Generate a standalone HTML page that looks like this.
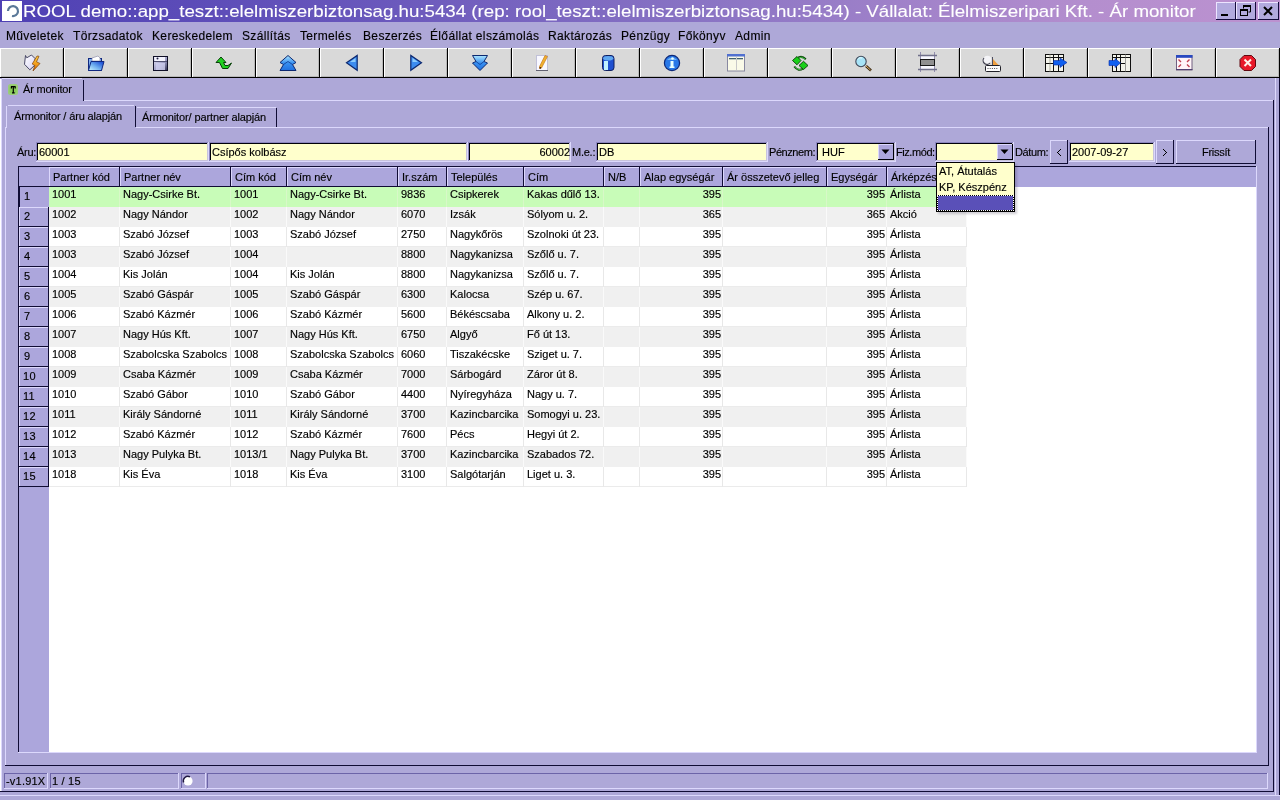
<!DOCTYPE html>
<html><head><meta charset="utf-8"><style>
*{box-sizing:border-box;margin:0;padding:0}
html,body{width:1280px;height:800px;overflow:hidden}
body{position:relative;background:#aea8d8;font-family:"Liberation Sans",sans-serif;font-size:11px;color:#000}
.a{position:absolute}
.t{position:absolute;white-space:nowrap;line-height:13px;-webkit-text-stroke:0.15px #000}
svg{position:absolute;overflow:visible}
</style></head><body>
<div id="root" style="position:absolute;left:0;top:0;width:1280px;height:800px;will-change:transform">
<div class="a" style="left:0px;top:0px;width:1280px;height:22px;background:linear-gradient(to right,#4e40b4 0%,#6a58bc 30%,#8a74c4 55%,#b48ece 85%,#bc92d0 100%)"></div>
<div class="a" style="left:2px;top:1px;width:20px;height:20px;background:#fff"></div>
<svg style="left:2px;top:1px" width="20" height="20"><path d="M6 10 A5 5 0 1 1 10 15" fill="none" stroke="#5a7898" stroke-width="2.2"/></svg>
<div class="t" style="left:23px;top:1px;font-size:17px;line-height:21px;color:#fff;transform:scaleX(1.1);transform-origin:0 0;-webkit-text-stroke:0.1px #fff">ROOL demo::app_teszt::elelmiszerbiztonsag.hu:5434 (rep: rool_teszt::elelmiszerbiztonsag.hu:5434) - Vállalat: Élelmiszeripari Kft. - Ár monitor</div>
<div class="a" style="left:1216px;top:2px;width:20px;height:18px;background:#b2aade"></div>
<div class="a" style="left:1216px;top:2px;width:20px;height:1px;background:#ece4ff"></div>
<div class="a" style="left:1216px;top:2px;width:1px;height:18px;background:#ece4ff"></div>
<div class="a" style="left:1216px;top:19px;width:20px;height:1px;background:#140c3c"></div>
<div class="a" style="left:1235px;top:2px;width:1px;height:18px;background:#140c3c"></div>
<div class="a" style="left:1236px;top:2px;width:20px;height:18px;background:#b2aade"></div>
<div class="a" style="left:1236px;top:2px;width:20px;height:1px;background:#ece4ff"></div>
<div class="a" style="left:1236px;top:2px;width:1px;height:18px;background:#ece4ff"></div>
<div class="a" style="left:1236px;top:19px;width:20px;height:1px;background:#140c3c"></div>
<div class="a" style="left:1255px;top:2px;width:1px;height:18px;background:#140c3c"></div>
<div class="a" style="left:1258px;top:2px;width:21px;height:18px;background:#b2aade"></div>
<div class="a" style="left:1258px;top:2px;width:21px;height:1px;background:#ece4ff"></div>
<div class="a" style="left:1258px;top:2px;width:1px;height:18px;background:#ece4ff"></div>
<div class="a" style="left:1258px;top:19px;width:21px;height:1px;background:#140c3c"></div>
<div class="a" style="left:1278px;top:2px;width:1px;height:18px;background:#140c3c"></div>
<svg style="left:1216px;top:2px" width="20" height="18"><rect x="5" y="12" width="7" height="2" fill="#000"/></svg>
<svg style="left:1236px;top:2px" width="20" height="18"><path d="M7.5 3.5h7v6.5h-2 M7.5 3.5v3" fill="none" stroke="#000" stroke-width="1"/><rect x="7" y="3" width="8" height="2" fill="#000"/><rect x="4.5" y="7.5" width="7" height="6" fill="none" stroke="#000"/><rect x="4" y="7" width="8" height="2" fill="#000"/></svg>
<svg style="left:1258px;top:2px" width="21" height="18"><path d="M6 5L14 13M14 5L6 13" stroke="#000" stroke-width="2"/></svg>
<div class="t" style="left:6px;top:30px;font-size:12px;letter-spacing:0.35px">Műveletek</div>
<div class="t" style="left:73px;top:30px;font-size:12px;letter-spacing:0.35px">Törzsadatok</div>
<div class="t" style="left:152px;top:30px;font-size:12px;letter-spacing:0.35px">Kereskedelem</div>
<div class="t" style="left:242px;top:30px;font-size:12px;letter-spacing:0.35px">Szállítás</div>
<div class="t" style="left:300px;top:30px;font-size:12px;letter-spacing:0.35px">Termelés</div>
<div class="t" style="left:363px;top:30px;font-size:12px;letter-spacing:0.35px">Beszerzés</div>
<div class="t" style="left:430px;top:30px;font-size:12px;letter-spacing:0.35px">Élőállat elszámolás</div>
<div class="t" style="left:548px;top:30px;font-size:12px;letter-spacing:0.35px">Raktározás</div>
<div class="t" style="left:621px;top:30px;font-size:12px;letter-spacing:0.35px">Pénzügy</div>
<div class="t" style="left:678px;top:30px;font-size:12px;letter-spacing:0.35px">Főkönyv</div>
<div class="t" style="left:735px;top:30px;font-size:12px;letter-spacing:0.35px">Admin</div>
<div class="a" style="left:0px;top:48px;width:64px;height:30px;background:#d9d9d9"></div>
<div class="a" style="left:0px;top:48px;width:64px;height:1px;background:#ffffff"></div>
<div class="a" style="left:0px;top:48px;width:1px;height:30px;background:#ffffff"></div>
<div class="a" style="left:0px;top:77px;width:64px;height:1px;background:#000000"></div>
<div class="a" style="left:63px;top:48px;width:1px;height:30px;background:#000000"></div>
<div class="a" style="left:62px;top:49px;width:1px;height:28px;background:#b8b8b8"></div>
<div class="a" style="left:1px;top:76px;width:62px;height:1px;background:#b8b8b8"></div>
<svg style="left:0;top:0" width="1280" height="80" viewBox="0 0 1280 80"><defs><linearGradient id="lt" x1="0" y1="0" x2="1" y2="1"><stop offset="0" stop-color="#ffffff"/><stop offset="1" stop-color="#d8d4f4"/></linearGradient>
<linearGradient id="lb" x1="0" y1="0" x2="0" y2="1"><stop offset="0" stop-color="#ffd040"/><stop offset="0.6" stop-color="#f09818"/><stop offset="1" stop-color="#c05808"/></linearGradient></defs>
<polygon points="25.5,55.5 26.8,57.8 31.5,55 35,58.5 34.5,65.5 29.8,69.8 24.5,64.3" fill="url(#lt)" stroke="#383858" stroke-width="0.9"/>
<polygon points="37,56 39,56.3 36.5,61.8 40,63.5 33,71 34.8,65.5 32.2,64" fill="url(#lb)" stroke="#804010" stroke-width="0.7"/></svg>
<div class="a" style="left:64px;top:48px;width:64px;height:30px;background:#d9d9d9"></div>
<div class="a" style="left:64px;top:48px;width:64px;height:1px;background:#ffffff"></div>
<div class="a" style="left:64px;top:48px;width:1px;height:30px;background:#ffffff"></div>
<div class="a" style="left:64px;top:77px;width:64px;height:1px;background:#000000"></div>
<div class="a" style="left:127px;top:48px;width:1px;height:30px;background:#000000"></div>
<div class="a" style="left:126px;top:49px;width:1px;height:28px;background:#b8b8b8"></div>
<div class="a" style="left:65px;top:76px;width:62px;height:1px;background:#b8b8b8"></div>
<svg style="left:0;top:0" width="1280" height="80" viewBox="0 0 1280 80"><rect x="88.5" y="58.5" width="13" height="12" fill="#80b0f0" stroke="#102880"/>
<polygon points="92,58 98,56 100,58 100,61 92,61" fill="#ffffff" stroke="#8080a0" stroke-width="0.6"/>
<defs><linearGradient id="fg" x1="0" y1="1" x2="1" y2="0"><stop offset="0" stop-color="#d0f8ff"/><stop offset="0.45" stop-color="#70b0f0"/><stop offset="1" stop-color="#0838d0"/></linearGradient></defs>
<polygon points="91,61.5 104,61.5 101.5,70.5 88.5,70.5" fill="url(#fg)" stroke="#102880"/></svg>
<div class="a" style="left:128px;top:48px;width:64px;height:30px;background:#d9d9d9"></div>
<div class="a" style="left:128px;top:48px;width:64px;height:1px;background:#ffffff"></div>
<div class="a" style="left:128px;top:48px;width:1px;height:30px;background:#ffffff"></div>
<div class="a" style="left:128px;top:77px;width:64px;height:1px;background:#000000"></div>
<div class="a" style="left:191px;top:48px;width:1px;height:30px;background:#000000"></div>
<div class="a" style="left:190px;top:49px;width:1px;height:28px;background:#b8b8b8"></div>
<div class="a" style="left:129px;top:76px;width:62px;height:1px;background:#b8b8b8"></div>
<svg style="left:0;top:0" width="1280" height="80" viewBox="0 0 1280 80"><defs><linearGradient id="fl" x1="0" y1="0" x2="1" y2="1"><stop offset="0" stop-color="#f0f0ff"/><stop offset="0.6" stop-color="#9898c0"/><stop offset="1" stop-color="#303050"/></linearGradient></defs>
<rect x="153.5" y="56.5" width="14" height="14" fill="url(#fl)" stroke="#101028"/>
<rect x="155" y="57" width="10" height="4" fill="#f4f4ff"/>
<line x1="154" y1="61.5" x2="167" y2="61.5" stroke="#505070"/>
<rect x="156" y="63" width="9" height="7" fill="#d0d0f0" opacity="0.8"/>
<circle cx="157.5" cy="58.5" r="1" fill="#202040"/></svg>
<div class="a" style="left:192px;top:48px;width:64px;height:30px;background:#d9d9d9"></div>
<div class="a" style="left:192px;top:48px;width:64px;height:1px;background:#ffffff"></div>
<div class="a" style="left:192px;top:48px;width:1px;height:30px;background:#ffffff"></div>
<div class="a" style="left:192px;top:77px;width:64px;height:1px;background:#000000"></div>
<div class="a" style="left:255px;top:48px;width:1px;height:30px;background:#000000"></div>
<div class="a" style="left:254px;top:49px;width:1px;height:28px;background:#b8b8b8"></div>
<div class="a" style="left:193px;top:76px;width:62px;height:1px;background:#b8b8b8"></div>
<svg style="left:0;top:0" width="1280" height="80" viewBox="0 0 1280 80"><polygon points="216,62.5 221,57 226,62.5 223.5,62.5 225,65.5 228,65.5 231.5,63 228,68.5 222.5,68.5 219.5,62.5" fill="#20d020" stroke="#084008" stroke-width="1"/></svg>
<div class="a" style="left:256px;top:48px;width:64px;height:30px;background:#d9d9d9"></div>
<div class="a" style="left:256px;top:48px;width:64px;height:1px;background:#ffffff"></div>
<div class="a" style="left:256px;top:48px;width:1px;height:30px;background:#ffffff"></div>
<div class="a" style="left:256px;top:77px;width:64px;height:1px;background:#000000"></div>
<div class="a" style="left:319px;top:48px;width:1px;height:30px;background:#000000"></div>
<div class="a" style="left:318px;top:49px;width:1px;height:28px;background:#b8b8b8"></div>
<div class="a" style="left:257px;top:76px;width:62px;height:1px;background:#b8b8b8"></div>
<svg style="left:0;top:0" width="1280" height="80" viewBox="0 0 1280 80"><defs><linearGradient id="bg4" x1="0" y1="0" x2="0" y2="1"><stop offset="0" stop-color="#b0e8ff"/><stop offset="0.5" stop-color="#3890f0"/><stop offset="1" stop-color="#2070e0"/></linearGradient></defs>
<polygon points="288,55.5 296,62.5 292.5,64.5 296,70.5 280,70.5 283.5,64.5 280,62.5" fill="url(#bg4)" stroke="#0c2870" stroke-width="1"/>
<path d="M283.5 64.5L288 61.5L292.5 64.5" fill="none" stroke="#0c3890" stroke-width="0.8"/></svg>
<div class="a" style="left:320px;top:48px;width:64px;height:30px;background:#d9d9d9"></div>
<div class="a" style="left:320px;top:48px;width:64px;height:1px;background:#ffffff"></div>
<div class="a" style="left:320px;top:48px;width:1px;height:30px;background:#ffffff"></div>
<div class="a" style="left:320px;top:77px;width:64px;height:1px;background:#000000"></div>
<div class="a" style="left:383px;top:48px;width:1px;height:30px;background:#000000"></div>
<div class="a" style="left:382px;top:49px;width:1px;height:28px;background:#b8b8b8"></div>
<div class="a" style="left:321px;top:76px;width:62px;height:1px;background:#b8b8b8"></div>
<svg style="left:0;top:0" width="1280" height="80" viewBox="0 0 1280 80"><polygon points="346.5,62.8 357.2,55.5 357.2,70.3" fill="#3c8cf0" stroke="#0c2870" stroke-width="1.2"/>
<polygon points="350,62 355.5,58 355.5,62" fill="#a0dcff" opacity="0.8"/></svg>
<div class="a" style="left:384px;top:48px;width:64px;height:30px;background:#d9d9d9"></div>
<div class="a" style="left:384px;top:48px;width:64px;height:1px;background:#ffffff"></div>
<div class="a" style="left:384px;top:48px;width:1px;height:30px;background:#ffffff"></div>
<div class="a" style="left:384px;top:77px;width:64px;height:1px;background:#000000"></div>
<div class="a" style="left:447px;top:48px;width:1px;height:30px;background:#000000"></div>
<div class="a" style="left:446px;top:49px;width:1px;height:28px;background:#b8b8b8"></div>
<div class="a" style="left:385px;top:76px;width:62px;height:1px;background:#b8b8b8"></div>
<svg style="left:0;top:0" width="1280" height="80" viewBox="0 0 1280 80"><polygon points="421.5,62.8 410.8,55.5 410.8,70.3" fill="#3c8cf0" stroke="#0c2870" stroke-width="1.2"/>
<polygon points="418,62 412.5,58 412.5,62" fill="#a0dcff" opacity="0.8"/></svg>
<div class="a" style="left:448px;top:48px;width:64px;height:30px;background:#d9d9d9"></div>
<div class="a" style="left:448px;top:48px;width:64px;height:1px;background:#ffffff"></div>
<div class="a" style="left:448px;top:48px;width:1px;height:30px;background:#ffffff"></div>
<div class="a" style="left:448px;top:77px;width:64px;height:1px;background:#000000"></div>
<div class="a" style="left:511px;top:48px;width:1px;height:30px;background:#000000"></div>
<div class="a" style="left:510px;top:49px;width:1px;height:28px;background:#b8b8b8"></div>
<div class="a" style="left:449px;top:76px;width:62px;height:1px;background:#b8b8b8"></div>
<svg style="left:0;top:0" width="1280" height="80" viewBox="0 0 1280 80"><defs><linearGradient id="bg7" x1="0" y1="0" x2="0" y2="1"><stop offset="0" stop-color="#b0e8ff"/><stop offset="0.5" stop-color="#3890f0"/><stop offset="1" stop-color="#2070e0"/></linearGradient></defs>
<polygon points="472.5,55.5 487.5,55.5 484,61.5 487.5,63 480,70.5 472.5,63 476,61.5" fill="url(#bg7)" stroke="#0c2870" stroke-width="1"/>
<path d="M476 61.5L480 64.5L484 61.5" fill="none" stroke="#0c3890" stroke-width="0.8"/></svg>
<div class="a" style="left:512px;top:48px;width:64px;height:30px;background:#d9d9d9"></div>
<div class="a" style="left:512px;top:48px;width:64px;height:1px;background:#ffffff"></div>
<div class="a" style="left:512px;top:48px;width:1px;height:30px;background:#ffffff"></div>
<div class="a" style="left:512px;top:77px;width:64px;height:1px;background:#000000"></div>
<div class="a" style="left:575px;top:48px;width:1px;height:30px;background:#000000"></div>
<div class="a" style="left:574px;top:49px;width:1px;height:28px;background:#b8b8b8"></div>
<div class="a" style="left:513px;top:76px;width:62px;height:1px;background:#b8b8b8"></div>
<svg style="left:0;top:0" width="1280" height="80" viewBox="0 0 1280 80"><rect x="536.5" y="55.5" width="11" height="15" fill="#f8f8ff" stroke="#c0c0d8" stroke-width="1"/>
<line x1="536" y1="70.5" x2="548" y2="70.5" stroke="#606070"/>
<polygon points="545,55.5 547.5,56.5 541.5,68 539.5,68.5 539.5,66.5" fill="#f0b030" stroke="#c07010" stroke-width="0.6"/>
<circle cx="540.3" cy="67.8" r="0.9" fill="#402010"/></svg>
<div class="a" style="left:576px;top:48px;width:64px;height:30px;background:#d9d9d9"></div>
<div class="a" style="left:576px;top:48px;width:64px;height:1px;background:#ffffff"></div>
<div class="a" style="left:576px;top:48px;width:1px;height:30px;background:#ffffff"></div>
<div class="a" style="left:576px;top:77px;width:64px;height:1px;background:#000000"></div>
<div class="a" style="left:639px;top:48px;width:1px;height:30px;background:#000000"></div>
<div class="a" style="left:638px;top:49px;width:1px;height:28px;background:#b8b8b8"></div>
<div class="a" style="left:577px;top:76px;width:62px;height:1px;background:#b8b8b8"></div>
<svg style="left:0;top:0" width="1280" height="80" viewBox="0 0 1280 80"><rect x="602.5" y="55.5" width="11.5" height="15" rx="3" fill="#2050d0" stroke="#102060" stroke-width="1"/>
<ellipse cx="608.2" cy="58.3" rx="5" ry="2.3" fill="#60a8f0"/>
<rect x="604" y="61" width="4" height="9" fill="#c0f0ff"/></svg>
<div class="a" style="left:640px;top:48px;width:64px;height:30px;background:#d9d9d9"></div>
<div class="a" style="left:640px;top:48px;width:64px;height:1px;background:#ffffff"></div>
<div class="a" style="left:640px;top:48px;width:1px;height:30px;background:#ffffff"></div>
<div class="a" style="left:640px;top:77px;width:64px;height:1px;background:#000000"></div>
<div class="a" style="left:703px;top:48px;width:1px;height:30px;background:#000000"></div>
<div class="a" style="left:702px;top:49px;width:1px;height:28px;background:#b8b8b8"></div>
<div class="a" style="left:641px;top:76px;width:62px;height:1px;background:#b8b8b8"></div>
<svg style="left:0;top:0" width="1280" height="80" viewBox="0 0 1280 80"><circle cx="672" cy="63" r="7.6" fill="#2878e8" stroke="#0c2878" stroke-width="1.2"/>
<path d="M667 60 A6 5 0 0 1 677 60" fill="#a8e0ff" opacity="0.6"/>
<rect x="670.5" y="61" width="3" height="6.5" fill="#e8ffff"/><rect x="669.5" y="66.5" width="5" height="1.5" fill="#e8ffff"/>
<circle cx="672.5" cy="58.5" r="1.3" fill="#e8ffff"/></svg>
<div class="a" style="left:704px;top:48px;width:64px;height:30px;background:#d9d9d9"></div>
<div class="a" style="left:704px;top:48px;width:64px;height:1px;background:#ffffff"></div>
<div class="a" style="left:704px;top:48px;width:1px;height:30px;background:#ffffff"></div>
<div class="a" style="left:704px;top:77px;width:64px;height:1px;background:#000000"></div>
<div class="a" style="left:767px;top:48px;width:1px;height:30px;background:#000000"></div>
<div class="a" style="left:766px;top:49px;width:1px;height:28px;background:#b8b8b8"></div>
<div class="a" style="left:705px;top:76px;width:62px;height:1px;background:#b8b8b8"></div>
<svg style="left:0;top:0" width="1280" height="80" viewBox="0 0 1280 80"><rect x="727.5" y="54.5" width="17" height="16.5" fill="#fafae8" stroke="#8888a0" stroke-width="1"/>
<rect x="727" y="54" width="18" height="2.5" fill="#5070d0"/>
<rect x="729" y="58" width="7" height="1.3" fill="#406070"/><rect x="737" y="58" width="6" height="1.3" fill="#406070"/>
<line x1="736.5" y1="57" x2="736.5" y2="70" stroke="#c8c8c8"/></svg>
<div class="a" style="left:768px;top:48px;width:64px;height:30px;background:#d9d9d9"></div>
<div class="a" style="left:768px;top:48px;width:64px;height:1px;background:#ffffff"></div>
<div class="a" style="left:768px;top:48px;width:1px;height:30px;background:#ffffff"></div>
<div class="a" style="left:768px;top:77px;width:64px;height:1px;background:#000000"></div>
<div class="a" style="left:831px;top:48px;width:1px;height:30px;background:#000000"></div>
<div class="a" style="left:830px;top:49px;width:1px;height:28px;background:#b8b8b8"></div>
<div class="a" style="left:769px;top:76px;width:62px;height:1px;background:#b8b8b8"></div>
<svg style="left:0;top:0" width="1280" height="80" viewBox="0 0 1280 80"><path d="M797 58.5Q801.5 55 805.8 59.2" fill="none" stroke="#0a4a0a" stroke-width="2"/><path d="M797.5 58.3Q801.5 55.8 805 59" fill="none" stroke="#50e050" stroke-width="0.8"/>
<polygon points="792.5,60.5 797,56.5 801,60.5 797,64.8" fill="#18d018" stroke="#084008" stroke-width="0.9"/>
<path d="M803 68.5Q798.5 72 794.3 66.5" fill="none" stroke="#0a4a0a" stroke-width="2"/><path d="M802.5 68.7Q798.5 71.2 795 66.8" fill="none" stroke="#50e050" stroke-width="0.8"/>
<polygon points="799,65.5 803.5,61.3 808,65.5 803.5,69.5" fill="#18d018" stroke="#084008" stroke-width="0.9"/></svg>
<div class="a" style="left:832px;top:48px;width:64px;height:30px;background:#d9d9d9"></div>
<div class="a" style="left:832px;top:48px;width:64px;height:1px;background:#ffffff"></div>
<div class="a" style="left:832px;top:48px;width:1px;height:30px;background:#ffffff"></div>
<div class="a" style="left:832px;top:77px;width:64px;height:1px;background:#000000"></div>
<div class="a" style="left:895px;top:48px;width:1px;height:30px;background:#000000"></div>
<div class="a" style="left:894px;top:49px;width:1px;height:28px;background:#b8b8b8"></div>
<div class="a" style="left:833px;top:76px;width:62px;height:1px;background:#b8b8b8"></div>
<svg style="left:0;top:0" width="1280" height="80" viewBox="0 0 1280 80"><circle cx="861" cy="61.5" r="5.2" fill="#a8e4f8" stroke="#404858" stroke-width="1.1"/>
<path d="M858 59.5 A3 3 0 0 1 862 58" stroke="#e8ffff" fill="none"/>
<line x1="866" y1="66" x2="871" y2="70.5" stroke="#3a2810" stroke-width="2.6"/>
<line x1="866" y1="66" x2="870.5" y2="70" stroke="#e8b870" stroke-width="1"/></svg>
<div class="a" style="left:896px;top:48px;width:64px;height:30px;background:#d9d9d9"></div>
<div class="a" style="left:896px;top:48px;width:64px;height:1px;background:#ffffff"></div>
<div class="a" style="left:896px;top:48px;width:1px;height:30px;background:#ffffff"></div>
<div class="a" style="left:896px;top:77px;width:64px;height:1px;background:#000000"></div>
<div class="a" style="left:959px;top:48px;width:1px;height:30px;background:#000000"></div>
<div class="a" style="left:958px;top:49px;width:1px;height:28px;background:#b8b8b8"></div>
<div class="a" style="left:897px;top:76px;width:62px;height:1px;background:#b8b8b8"></div>
<svg style="left:0;top:0" width="1280" height="80" viewBox="0 0 1280 80"><rect x="920.5" y="56" width="14" height="3.5" fill="#f8f8ff"/><rect x="920.5" y="65.5" width="14" height="3.5" fill="#f8f8ff"/>
<line x1="920.5" y1="52" x2="920.5" y2="72" stroke="#8a84a8" stroke-width="0.9"/><line x1="934.5" y1="52" x2="934.5" y2="72" stroke="#8a84a8" stroke-width="0.9"/>
<path d="M918 55.5h19M918 69.5h19" stroke="#70708a" stroke-width="1.4"/>
<rect x="920.5" y="59.5" width="14" height="6" fill="#909090" stroke="#181818" stroke-width="1"/></svg>
<div class="a" style="left:960px;top:48px;width:64px;height:30px;background:#d9d9d9"></div>
<div class="a" style="left:960px;top:48px;width:64px;height:1px;background:#ffffff"></div>
<div class="a" style="left:960px;top:48px;width:1px;height:30px;background:#ffffff"></div>
<div class="a" style="left:960px;top:77px;width:64px;height:1px;background:#000000"></div>
<div class="a" style="left:1023px;top:48px;width:1px;height:30px;background:#000000"></div>
<div class="a" style="left:1022px;top:49px;width:1px;height:28px;background:#b8b8b8"></div>
<div class="a" style="left:961px;top:76px;width:62px;height:1px;background:#b8b8b8"></div>
<svg style="left:0;top:0" width="1280" height="80" viewBox="0 0 1280 80"><polygon points="992,58 998.5,65 992,65" fill="#f0a040"/>
<rect x="985.5" y="65.5" width="15" height="6" rx="1" fill="#fcfcfc" stroke="#202028" stroke-width="1"/>
<path d="M987.5 68.5h11" stroke="#505058" stroke-dasharray="1 1.2"/>
<line x1="992.5" y1="57" x2="992.5" y2="65" stroke="#505060"/>
<circle cx="987.5" cy="59.5" r="3.8" fill="#f4f4f8"/>
<path d="M984 58A3.8 3.8 0 0 0 990 63" fill="none" stroke="#404050" stroke-width="1.1"/></svg>
<div class="a" style="left:1024px;top:48px;width:64px;height:30px;background:#d9d9d9"></div>
<div class="a" style="left:1024px;top:48px;width:64px;height:1px;background:#ffffff"></div>
<div class="a" style="left:1024px;top:48px;width:1px;height:30px;background:#ffffff"></div>
<div class="a" style="left:1024px;top:77px;width:64px;height:1px;background:#000000"></div>
<div class="a" style="left:1087px;top:48px;width:1px;height:30px;background:#000000"></div>
<div class="a" style="left:1086px;top:49px;width:1px;height:28px;background:#b8b8b8"></div>
<div class="a" style="left:1025px;top:76px;width:62px;height:1px;background:#b8b8b8"></div>
<svg style="left:0;top:0" width="1280" height="80" viewBox="0 0 1280 80"><rect x="1045.5" y="54.5" width="18" height="17" fill="#f4f4ec" stroke="#101010" stroke-width="1"/>
<line x1="1045" y1="57.5" x2="1064" y2="57.5" stroke="#101010"/><line x1="1045" y1="63.5" x2="1054" y2="63.5" stroke="#101010"/>
<line x1="1053.5" y1="54" x2="1053.5" y2="72" stroke="#101010"/><line x1="1058.5" y1="54" x2="1058.5" y2="72" stroke="#101010"/><line x1="1050" y1="54" x2="1050" y2="72" stroke="#808070" stroke-width="0.6"/>
<polygon points="1053.5,60.5 1060,60.5 1060,58 1067,62.5 1060,67.5 1060,65 1053.5,65" fill="#1060f0" stroke="#0828a0" stroke-width="0.6"/></svg>
<div class="a" style="left:1088px;top:48px;width:64px;height:30px;background:#d9d9d9"></div>
<div class="a" style="left:1088px;top:48px;width:64px;height:1px;background:#ffffff"></div>
<div class="a" style="left:1088px;top:48px;width:1px;height:30px;background:#ffffff"></div>
<div class="a" style="left:1088px;top:77px;width:64px;height:1px;background:#000000"></div>
<div class="a" style="left:1151px;top:48px;width:1px;height:30px;background:#000000"></div>
<div class="a" style="left:1150px;top:49px;width:1px;height:28px;background:#b8b8b8"></div>
<div class="a" style="left:1089px;top:76px;width:62px;height:1px;background:#b8b8b8"></div>
<svg style="left:0;top:0" width="1280" height="80" viewBox="0 0 1280 80"><rect x="1112.5" y="54.5" width="18" height="17" fill="#f4f4ec" stroke="#101010" stroke-width="1"/>
<line x1="1112" y1="57.5" x2="1131" y2="57.5" stroke="#101010"/><line x1="1120" y1="63.5" x2="1125" y2="63.5" stroke="#101010"/>
<line x1="1120.5" y1="54" x2="1120.5" y2="72" stroke="#101010"/><line x1="1116.5" y1="54" x2="1116.5" y2="72" stroke="#101010"/><line x1="1125.5" y1="54" x2="1125.5" y2="72" stroke="#606060" stroke-width="0.6"/>
<polygon points="1109,60.5 1115,60.5 1115,58.5 1120.5,63 1115,67.5 1115,65.5 1109,65.5" fill="#1060f0" stroke="#0828a0" stroke-width="0.6"/></svg>
<div class="a" style="left:1152px;top:48px;width:64px;height:30px;background:#d9d9d9"></div>
<div class="a" style="left:1152px;top:48px;width:64px;height:1px;background:#ffffff"></div>
<div class="a" style="left:1152px;top:48px;width:1px;height:30px;background:#ffffff"></div>
<div class="a" style="left:1152px;top:77px;width:64px;height:1px;background:#000000"></div>
<div class="a" style="left:1215px;top:48px;width:1px;height:30px;background:#000000"></div>
<div class="a" style="left:1214px;top:49px;width:1px;height:28px;background:#b8b8b8"></div>
<div class="a" style="left:1153px;top:76px;width:62px;height:1px;background:#b8b8b8"></div>
<svg style="left:0;top:0" width="1280" height="80" viewBox="0 0 1280 80"><rect x="1176.5" y="55.5" width="15.5" height="14.5" fill="#fff4f8" stroke="#706080" stroke-width="1"/>
<rect x="1176" y="55" width="16.5" height="2.8" fill="#2848c0"/>
<path d="M1178.5 59.5l2.5 2.5M1189.5 59.5l-2.5 2.5M1178.5 67l2.5-2.5M1189.5 67l-2.5-2.5" stroke="#c04050" stroke-width="1.4"/>
<line x1="1176" y1="69.5" x2="1192.5" y2="69.5" stroke="#504070"/></svg>
<div class="a" style="left:1216px;top:48px;width:64px;height:30px;background:#d9d9d9"></div>
<div class="a" style="left:1216px;top:48px;width:64px;height:1px;background:#ffffff"></div>
<div class="a" style="left:1216px;top:48px;width:1px;height:30px;background:#ffffff"></div>
<div class="a" style="left:1216px;top:77px;width:64px;height:1px;background:#000000"></div>
<div class="a" style="left:1279px;top:48px;width:1px;height:30px;background:#000000"></div>
<div class="a" style="left:1278px;top:49px;width:1px;height:28px;background:#b8b8b8"></div>
<div class="a" style="left:1217px;top:76px;width:62px;height:1px;background:#b8b8b8"></div>
<svg style="left:0;top:0" width="1280" height="80" viewBox="0 0 1280 80"><polygon points="1244,55.5 1251.5,55.5 1255.5,59.5 1255.5,66.5 1251.5,70.5 1244,70.5 1240,66.5 1240,59.5" fill="#e81828" stroke="#600810" stroke-width="1"/>
<path d="M1244.5 59.5l6.5 6.5M1251 59.5l-6.5 6.5" stroke="#fff0e8" stroke-width="2"/></svg>
<div class="a" style="left:0px;top:100px;width:1274px;height:692px;background:#aea8d8"></div>
<div class="a" style="left:1px;top:100px;width:1272px;height:1px;background:#dcd8fc"></div>
<div class="a" style="left:0px;top:100px;width:1px;height:692px;background:#ffffff"></div>
<div class="a" style="left:1px;top:100px;width:1px;height:692px;background:#dcd8fc"></div>
<div class="a" style="left:1273px;top:100px;width:1px;height:692px;background:#100c34"></div>
<div class="a" style="left:0px;top:791px;width:1274px;height:1px;background:#100c34"></div>
<div class="a" style="left:1px;top:78px;width:82px;height:23px;background:#aea8d8"></div>
<div class="a" style="left:2px;top:78px;width:80px;height:1px;background:#dcd8fc"></div>
<div class="a" style="left:0px;top:79px;width:1px;height:22px;background:#ffffff"></div>
<div class="a" style="left:1px;top:79px;width:1px;height:22px;background:#dcd8fc"></div>
<div class="a" style="left:83px;top:80px;width:1px;height:21px;background:#100c34"></div>
<svg style="left:8px;top:84px" width="10" height="11"><rect x="0" y="0" width="10" height="11" rx="2.5" fill="#98d070" opacity="0.9"/><rect x="1.5" y="1.5" width="7" height="8" rx="2" fill="#88cc58"/><path d="M3 2.7h4.5M3.4 2.5v2M7.2 2.5v2M5.3 2.5v6.3M4 8.8h2.7" stroke="#000" stroke-width="1.2"/></svg>
<div class="t" style="left:23px;top:83px;letter-spacing:-0.2px">Ár monitor</div>
<div class="a" style="left:1275px;top:78px;width:1px;height:717px;background:#dcd8fc"></div>
<div class="a" style="left:1279px;top:78px;width:1px;height:717px;background:#0c0830"></div>
<div class="a" style="left:0px;top:795px;width:1280px;height:1px;background:#dcd8fc"></div>
<div class="a" style="left:6px;top:127px;width:1262px;height:1px;background:#dcd8fc"></div>
<div class="a" style="left:5px;top:127px;width:1px;height:639px;background:#dcd8fc"></div>
<div class="a" style="left:1268px;top:127px;width:1px;height:639px;background:#100c34"></div>
<div class="a" style="left:5px;top:765px;width:1264px;height:1px;background:#100c34"></div>
<div class="a" style="left:6px;top:105px;width:130px;height:23px;background:#aea8d8"></div>
<div class="a" style="left:8px;top:105px;width:126px;height:1px;background:#dcd8fc"></div>
<div class="a" style="left:6px;top:106px;width:1px;height:22px;background:#dcd8fc"></div>
<div class="a" style="left:135px;top:106px;width:1px;height:21px;background:#100c34"></div>
<div class="t" style="left:14px;top:110px;letter-spacing:-0.14px">Ármonitor / áru alapján</div>
<div class="a" style="left:137px;top:107px;width:139px;height:1px;background:#dcd8fc"></div>
<div class="a" style="left:276px;top:108px;width:1px;height:19px;background:#100c34"></div>
<div class="t" style="left:142px;top:111px;letter-spacing:-0.12px">Ármonitor/ partner alapján</div>
<div class="t" style="left:17px;top:146px;letter-spacing:-0.3px">Áru:</div>
<div class="a" style="left:36px;top:142px;width:173px;height:20px;background:#ffffcc"></div>
<div class="a" style="left:36px;top:142px;width:173px;height:1px;background:#8c86c0"></div>
<div class="a" style="left:36px;top:142px;width:1px;height:20px;background:#8c86c0"></div>
<div class="a" style="left:37px;top:143px;width:171px;height:1px;background:#000008"></div>
<div class="a" style="left:37px;top:143px;width:1px;height:18px;background:#000008"></div>
<div class="a" style="left:37px;top:160px;width:171px;height:1px;background:#c8c4dc"></div>
<div class="a" style="left:207px;top:143px;width:1px;height:18px;background:#c8c4dc"></div>
<div class="a" style="left:36px;top:161px;width:173px;height:1px;background:#dcd8fc"></div>
<div class="a" style="left:208px;top:142px;width:1px;height:20px;background:#dcd8fc"></div>
<div class="t" style="left:39px;top:146px;">60001</div>
<div class="a" style="left:209px;top:142px;width:259px;height:20px;background:#ffffcc"></div>
<div class="a" style="left:209px;top:142px;width:259px;height:1px;background:#8c86c0"></div>
<div class="a" style="left:209px;top:142px;width:1px;height:20px;background:#8c86c0"></div>
<div class="a" style="left:210px;top:143px;width:257px;height:1px;background:#000008"></div>
<div class="a" style="left:210px;top:143px;width:1px;height:18px;background:#000008"></div>
<div class="a" style="left:210px;top:160px;width:257px;height:1px;background:#c8c4dc"></div>
<div class="a" style="left:466px;top:143px;width:1px;height:18px;background:#c8c4dc"></div>
<div class="a" style="left:209px;top:161px;width:259px;height:1px;background:#dcd8fc"></div>
<div class="a" style="left:467px;top:142px;width:1px;height:20px;background:#dcd8fc"></div>
<div class="t" style="left:212px;top:146px;">Csípős kolbász</div>
<div class="a" style="left:468px;top:142px;width:103px;height:20px;background:#ffffcc"></div>
<div class="a" style="left:468px;top:142px;width:103px;height:1px;background:#8c86c0"></div>
<div class="a" style="left:468px;top:142px;width:1px;height:20px;background:#8c86c0"></div>
<div class="a" style="left:469px;top:143px;width:101px;height:1px;background:#000008"></div>
<div class="a" style="left:469px;top:143px;width:1px;height:18px;background:#000008"></div>
<div class="a" style="left:469px;top:160px;width:101px;height:1px;background:#c8c4dc"></div>
<div class="a" style="left:569px;top:143px;width:1px;height:18px;background:#c8c4dc"></div>
<div class="a" style="left:468px;top:161px;width:103px;height:1px;background:#dcd8fc"></div>
<div class="a" style="left:570px;top:142px;width:1px;height:20px;background:#dcd8fc"></div>
<div class="t" style="left:468px;top:146px;width:102px;text-align:right">60002</div>
<div class="t" style="left:572px;top:146px;letter-spacing:-0.25px">M.e.:</div>
<div class="a" style="left:596px;top:142px;width:172px;height:20px;background:#ffffcc"></div>
<div class="a" style="left:596px;top:142px;width:172px;height:1px;background:#8c86c0"></div>
<div class="a" style="left:596px;top:142px;width:1px;height:20px;background:#8c86c0"></div>
<div class="a" style="left:597px;top:143px;width:170px;height:1px;background:#000008"></div>
<div class="a" style="left:597px;top:143px;width:1px;height:18px;background:#000008"></div>
<div class="a" style="left:597px;top:160px;width:170px;height:1px;background:#c8c4dc"></div>
<div class="a" style="left:766px;top:143px;width:1px;height:18px;background:#c8c4dc"></div>
<div class="a" style="left:596px;top:161px;width:172px;height:1px;background:#dcd8fc"></div>
<div class="a" style="left:767px;top:142px;width:1px;height:20px;background:#dcd8fc"></div>
<div class="t" style="left:599px;top:146px;">DB</div>
<div class="t" style="left:769px;top:146px;letter-spacing:-0.43px">Pénznem:</div>
<div class="a" style="left:816px;top:142px;width:80px;height:20px;background:#ffffcc"></div>
<div class="a" style="left:816px;top:142px;width:80px;height:1px;background:#8c86c0"></div>
<div class="a" style="left:816px;top:142px;width:1px;height:20px;background:#8c86c0"></div>
<div class="a" style="left:817px;top:143px;width:78px;height:1px;background:#000008"></div>
<div class="a" style="left:817px;top:143px;width:1px;height:18px;background:#000008"></div>
<div class="a" style="left:817px;top:160px;width:78px;height:1px;background:#c8c4dc"></div>
<div class="a" style="left:894px;top:143px;width:1px;height:18px;background:#c8c4dc"></div>
<div class="a" style="left:816px;top:161px;width:80px;height:1px;background:#dcd8fc"></div>
<div class="a" style="left:895px;top:142px;width:1px;height:20px;background:#dcd8fc"></div>
<div class="t" style="left:822px;top:146px;">HUF</div>
<div class="a" style="left:878px;top:144px;width:16px;height:16px;background:#aca6dc"></div>
<div class="a" style="left:878px;top:144px;width:16px;height:1px;background:#dcd8fc"></div>
<div class="a" style="left:878px;top:144px;width:1px;height:16px;background:#dcd8fc"></div>
<div class="a" style="left:878px;top:159px;width:16px;height:1px;background:#000008"></div>
<div class="a" style="left:893px;top:144px;width:1px;height:16px;background:#000008"></div>
<svg style="left:878px;top:144px" width="16" height="16"><polygon points="3.5,5.5 11.5,5.5 7.5,10" fill="#000"/></svg>
<div class="t" style="left:896px;top:146px;letter-spacing:-0.43px">Fiz.mód:</div>
<div class="a" style="left:935px;top:142px;width:79px;height:20px;background:#ffffcc"></div>
<div class="a" style="left:935px;top:142px;width:79px;height:1px;background:#8c86c0"></div>
<div class="a" style="left:935px;top:142px;width:1px;height:20px;background:#8c86c0"></div>
<div class="a" style="left:936px;top:143px;width:77px;height:1px;background:#000008"></div>
<div class="a" style="left:936px;top:143px;width:1px;height:18px;background:#000008"></div>
<div class="a" style="left:936px;top:160px;width:77px;height:1px;background:#c8c4dc"></div>
<div class="a" style="left:1012px;top:143px;width:1px;height:18px;background:#c8c4dc"></div>
<div class="a" style="left:935px;top:161px;width:79px;height:1px;background:#dcd8fc"></div>
<div class="a" style="left:1013px;top:142px;width:1px;height:20px;background:#dcd8fc"></div>
<div class="a" style="left:997px;top:144px;width:16px;height:16px;background:#aca6dc"></div>
<div class="a" style="left:997px;top:144px;width:16px;height:1px;background:#dcd8fc"></div>
<div class="a" style="left:997px;top:144px;width:1px;height:16px;background:#dcd8fc"></div>
<div class="a" style="left:997px;top:159px;width:16px;height:1px;background:#000008"></div>
<div class="a" style="left:1012px;top:144px;width:1px;height:16px;background:#000008"></div>
<svg style="left:997px;top:144px" width="16" height="16"><polygon points="3.5,5.5 11.5,5.5 7.5,10" fill="#000"/></svg>
<div class="t" style="left:1015px;top:146px;letter-spacing:-0.4px">Dátum:</div>
<div class="a" style="left:1050px;top:140px;width:18px;height:1px;background:#dcd8fc"></div>
<div class="a" style="left:1050px;top:140px;width:1px;height:24px;background:#dcd8fc"></div>
<div class="a" style="left:1050px;top:163px;width:18px;height:1px;background:#100c34"></div>
<div class="a" style="left:1067px;top:140px;width:1px;height:24px;background:#100c34"></div>
<svg style="left:1050px;top:140px" width="18" height="24"><path d="M11 9L7.5 12.5L11 16" fill="none" stroke="#000" stroke-width="1.2" shape-rendering="crispEdges"/></svg>
<div class="a" style="left:1069px;top:142px;width:86px;height:20px;background:#ffffcc"></div>
<div class="a" style="left:1069px;top:142px;width:86px;height:1px;background:#8c86c0"></div>
<div class="a" style="left:1069px;top:142px;width:1px;height:20px;background:#8c86c0"></div>
<div class="a" style="left:1070px;top:143px;width:84px;height:1px;background:#000008"></div>
<div class="a" style="left:1070px;top:143px;width:1px;height:18px;background:#000008"></div>
<div class="a" style="left:1070px;top:160px;width:84px;height:1px;background:#c8c4dc"></div>
<div class="a" style="left:1153px;top:143px;width:1px;height:18px;background:#c8c4dc"></div>
<div class="a" style="left:1069px;top:161px;width:86px;height:1px;background:#dcd8fc"></div>
<div class="a" style="left:1154px;top:142px;width:1px;height:20px;background:#dcd8fc"></div>
<div class="t" style="left:1072px;top:146px;">2007-09-27</div>
<div class="a" style="left:1156px;top:140px;width:18px;height:1px;background:#dcd8fc"></div>
<div class="a" style="left:1156px;top:140px;width:1px;height:24px;background:#dcd8fc"></div>
<div class="a" style="left:1156px;top:163px;width:18px;height:1px;background:#100c34"></div>
<div class="a" style="left:1173px;top:140px;width:1px;height:24px;background:#100c34"></div>
<svg style="left:1156px;top:140px" width="18" height="24"><path d="M7 9L10.5 12.5L7 16" fill="none" stroke="#000" stroke-width="1.2" shape-rendering="crispEdges"/></svg>
<div class="a" style="left:1176px;top:140px;width:80px;height:1px;background:#dcd8fc"></div>
<div class="a" style="left:1176px;top:140px;width:1px;height:24px;background:#dcd8fc"></div>
<div class="a" style="left:1176px;top:163px;width:80px;height:1px;background:#100c34"></div>
<div class="a" style="left:1255px;top:140px;width:1px;height:24px;background:#100c34"></div>
<div class="t" style="left:1176px;top:146px;width:80px;text-align:center;letter-spacing:-0.3px">Frissít</div>
<div class="a" style="left:18px;top:166px;width:1239px;height:1px;background:#100c34"></div>
<div class="a" style="left:18px;top:166px;width:1px;height:587px;background:#100c34"></div>
<div class="a" style="left:18px;top:752px;width:1239px;height:1px;background:#dcd8fc"></div>
<div class="a" style="left:1256px;top:166px;width:1px;height:587px;background:#dcd8fc"></div>
<div class="a" style="left:19px;top:167px;width:1237px;height:20px;background:#aca6dc"></div>
<div class="a" style="left:49px;top:187px;width:1207px;height:565px;background:#ffffff"></div>
<div class="a" style="left:19px;top:187px;width:30px;height:565px;background:#aca6dc"></div>
<div class="a" style="left:49px;top:167px;width:71px;height:1px;background:#dcd8fc"></div>
<div class="a" style="left:49px;top:167px;width:1px;height:19px;background:#dcd8fc"></div>
<div class="a" style="left:119px;top:167px;width:1px;height:20px;background:#100c34"></div>
<div class="t" style="left:53px;top:171px;">Partner kód</div>
<div class="a" style="left:120px;top:167px;width:111px;height:1px;background:#dcd8fc"></div>
<div class="a" style="left:120px;top:167px;width:1px;height:19px;background:#dcd8fc"></div>
<div class="a" style="left:230px;top:167px;width:1px;height:20px;background:#100c34"></div>
<div class="t" style="left:124px;top:171px;">Partner név</div>
<div class="a" style="left:231px;top:167px;width:56px;height:1px;background:#dcd8fc"></div>
<div class="a" style="left:231px;top:167px;width:1px;height:19px;background:#dcd8fc"></div>
<div class="a" style="left:286px;top:167px;width:1px;height:20px;background:#100c34"></div>
<div class="t" style="left:235px;top:171px;">Cím kód</div>
<div class="a" style="left:287px;top:167px;width:111px;height:1px;background:#dcd8fc"></div>
<div class="a" style="left:287px;top:167px;width:1px;height:19px;background:#dcd8fc"></div>
<div class="a" style="left:397px;top:167px;width:1px;height:20px;background:#100c34"></div>
<div class="t" style="left:291px;top:171px;">Cím név</div>
<div class="a" style="left:398px;top:167px;width:49px;height:1px;background:#dcd8fc"></div>
<div class="a" style="left:398px;top:167px;width:1px;height:19px;background:#dcd8fc"></div>
<div class="a" style="left:446px;top:167px;width:1px;height:20px;background:#100c34"></div>
<div class="t" style="left:402px;top:171px;">Ir.szám</div>
<div class="a" style="left:447px;top:167px;width:77px;height:1px;background:#dcd8fc"></div>
<div class="a" style="left:447px;top:167px;width:1px;height:19px;background:#dcd8fc"></div>
<div class="a" style="left:523px;top:167px;width:1px;height:20px;background:#100c34"></div>
<div class="t" style="left:451px;top:171px;">Település</div>
<div class="a" style="left:524px;top:167px;width:80px;height:1px;background:#dcd8fc"></div>
<div class="a" style="left:524px;top:167px;width:1px;height:19px;background:#dcd8fc"></div>
<div class="a" style="left:603px;top:167px;width:1px;height:20px;background:#100c34"></div>
<div class="t" style="left:528px;top:171px;">Cím</div>
<div class="a" style="left:604px;top:167px;width:36px;height:1px;background:#dcd8fc"></div>
<div class="a" style="left:604px;top:167px;width:1px;height:19px;background:#dcd8fc"></div>
<div class="a" style="left:639px;top:167px;width:1px;height:20px;background:#100c34"></div>
<div class="t" style="left:608px;top:171px;">N/B</div>
<div class="a" style="left:640px;top:167px;width:83px;height:1px;background:#dcd8fc"></div>
<div class="a" style="left:640px;top:167px;width:1px;height:19px;background:#dcd8fc"></div>
<div class="a" style="left:722px;top:167px;width:1px;height:20px;background:#100c34"></div>
<div class="t" style="left:644px;top:171px;">Alap egységár</div>
<div class="a" style="left:723px;top:167px;width:104px;height:1px;background:#dcd8fc"></div>
<div class="a" style="left:723px;top:167px;width:1px;height:19px;background:#dcd8fc"></div>
<div class="a" style="left:826px;top:167px;width:1px;height:20px;background:#100c34"></div>
<div class="t" style="left:727px;top:171px;">Ár összetevő jelleg</div>
<div class="a" style="left:827px;top:167px;width:60px;height:1px;background:#dcd8fc"></div>
<div class="a" style="left:827px;top:167px;width:1px;height:19px;background:#dcd8fc"></div>
<div class="a" style="left:886px;top:167px;width:1px;height:20px;background:#100c34"></div>
<div class="t" style="left:831px;top:171px;">Egységár</div>
<div class="a" style="left:887px;top:167px;width:80px;height:1px;background:#dcd8fc"></div>
<div class="a" style="left:887px;top:167px;width:1px;height:19px;background:#dcd8fc"></div>
<div class="a" style="left:966px;top:167px;width:1px;height:20px;background:#100c34"></div>
<div class="t" style="left:891px;top:171px;">Árképzés</div>
<div class="a" style="left:19px;top:186px;width:948px;height:1px;background:#100c34"></div>
<div class="a" style="left:49px;top:187px;width:918px;height:20px;background:#c8fcb8"></div>
<div class="a" style="left:119px;top:187px;width:1px;height:20px;background:#d8f8c8"></div>
<div class="t" style="left:52px;top:188px;">1001</div>
<div class="a" style="left:230px;top:187px;width:1px;height:20px;background:#d8f8c8"></div>
<div class="t" style="left:123px;top:188px;">Nagy-Csirke Bt.</div>
<div class="a" style="left:286px;top:187px;width:1px;height:20px;background:#d8f8c8"></div>
<div class="t" style="left:234px;top:188px;">1001</div>
<div class="a" style="left:397px;top:187px;width:1px;height:20px;background:#d8f8c8"></div>
<div class="t" style="left:290px;top:188px;">Nagy-Csirke Bt.</div>
<div class="a" style="left:446px;top:187px;width:1px;height:20px;background:#d8f8c8"></div>
<div class="t" style="left:401px;top:188px;">9836</div>
<div class="a" style="left:523px;top:187px;width:1px;height:20px;background:#d8f8c8"></div>
<div class="t" style="left:450px;top:188px;">Csipkerek</div>
<div class="a" style="left:603px;top:187px;width:1px;height:20px;background:#d8f8c8"></div>
<div class="t" style="left:527px;top:188px;">Kakas dűlő 13.</div>
<div class="a" style="left:639px;top:187px;width:1px;height:20px;background:#d8f8c8"></div>
<div class="a" style="left:722px;top:187px;width:1px;height:20px;background:#d8f8c8"></div>
<div class="t" style="left:640px;top:188px;width:81px;text-align:right">395</div>
<div class="a" style="left:826px;top:187px;width:1px;height:20px;background:#d8f8c8"></div>
<div class="a" style="left:886px;top:187px;width:1px;height:20px;background:#d8f8c8"></div>
<div class="t" style="left:827px;top:188px;width:58px;text-align:right">395</div>
<div class="a" style="left:966px;top:187px;width:1px;height:20px;background:#d8f8c8"></div>
<div class="t" style="left:890px;top:188px;">Árlista</div>
<div class="a" style="left:18px;top:187px;width:1px;height:20px;background:#100c34"></div>
<div class="a" style="left:19px;top:187px;width:1px;height:20px;background:#100c34"></div>
<div class="t" style="left:24px;top:190px;">1</div>
<div class="a" style="left:49px;top:207px;width:918px;height:20px;background:#f0f0f0"></div>
<div class="a" style="left:119px;top:207px;width:1px;height:20px;background:#fafafa"></div>
<div class="t" style="left:52px;top:208px;">1002</div>
<div class="a" style="left:230px;top:207px;width:1px;height:20px;background:#fafafa"></div>
<div class="t" style="left:123px;top:208px;">Nagy Nándor</div>
<div class="a" style="left:286px;top:207px;width:1px;height:20px;background:#fafafa"></div>
<div class="t" style="left:234px;top:208px;">1002</div>
<div class="a" style="left:397px;top:207px;width:1px;height:20px;background:#fafafa"></div>
<div class="t" style="left:290px;top:208px;">Nagy Nándor</div>
<div class="a" style="left:446px;top:207px;width:1px;height:20px;background:#fafafa"></div>
<div class="t" style="left:401px;top:208px;">6070</div>
<div class="a" style="left:523px;top:207px;width:1px;height:20px;background:#fafafa"></div>
<div class="t" style="left:450px;top:208px;">Izsák</div>
<div class="a" style="left:603px;top:207px;width:1px;height:20px;background:#fafafa"></div>
<div class="t" style="left:527px;top:208px;">Sólyom u. 2.</div>
<div class="a" style="left:639px;top:207px;width:1px;height:20px;background:#fafafa"></div>
<div class="a" style="left:722px;top:207px;width:1px;height:20px;background:#fafafa"></div>
<div class="t" style="left:640px;top:208px;width:81px;text-align:right">365</div>
<div class="a" style="left:826px;top:207px;width:1px;height:20px;background:#fafafa"></div>
<div class="a" style="left:886px;top:207px;width:1px;height:20px;background:#fafafa"></div>
<div class="t" style="left:827px;top:208px;width:58px;text-align:right">365</div>
<div class="a" style="left:966px;top:207px;width:1px;height:20px;background:#fafafa"></div>
<div class="t" style="left:890px;top:208px;">Akció</div>
<div class="a" style="left:19px;top:207px;width:30px;height:1px;background:#dcd8fc"></div>
<div class="a" style="left:19px;top:207px;width:1px;height:20px;background:#dcd8fc"></div>
<div class="a" style="left:19px;top:226px;width:30px;height:1px;background:#100c34"></div>
<div class="a" style="left:48px;top:207px;width:1px;height:20px;background:#100c34"></div>
<div class="t" style="left:24px;top:210px;">2</div>
<div class="a" style="left:49px;top:227px;width:918px;height:20px;background:#ffffff"></div>
<div class="a" style="left:49px;top:246px;width:918px;height:1px;background:#ebebeb"></div>
<div class="a" style="left:119px;top:227px;width:1px;height:20px;background:#e8e8e8"></div>
<div class="t" style="left:52px;top:228px;">1003</div>
<div class="a" style="left:230px;top:227px;width:1px;height:20px;background:#e8e8e8"></div>
<div class="t" style="left:123px;top:228px;">Szabó József</div>
<div class="a" style="left:286px;top:227px;width:1px;height:20px;background:#e8e8e8"></div>
<div class="t" style="left:234px;top:228px;">1003</div>
<div class="a" style="left:397px;top:227px;width:1px;height:20px;background:#e8e8e8"></div>
<div class="t" style="left:290px;top:228px;">Szabó József</div>
<div class="a" style="left:446px;top:227px;width:1px;height:20px;background:#e8e8e8"></div>
<div class="t" style="left:401px;top:228px;">2750</div>
<div class="a" style="left:523px;top:227px;width:1px;height:20px;background:#e8e8e8"></div>
<div class="t" style="left:450px;top:228px;">Nagykőrös</div>
<div class="a" style="left:603px;top:227px;width:1px;height:20px;background:#e8e8e8"></div>
<div class="t" style="left:527px;top:228px;">Szolnoki út 23.</div>
<div class="a" style="left:639px;top:227px;width:1px;height:20px;background:#e8e8e8"></div>
<div class="a" style="left:722px;top:227px;width:1px;height:20px;background:#e8e8e8"></div>
<div class="t" style="left:640px;top:228px;width:81px;text-align:right">395</div>
<div class="a" style="left:826px;top:227px;width:1px;height:20px;background:#e8e8e8"></div>
<div class="a" style="left:886px;top:227px;width:1px;height:20px;background:#e8e8e8"></div>
<div class="t" style="left:827px;top:228px;width:58px;text-align:right">395</div>
<div class="a" style="left:966px;top:227px;width:1px;height:20px;background:#e8e8e8"></div>
<div class="t" style="left:890px;top:228px;">Árlista</div>
<div class="a" style="left:19px;top:227px;width:30px;height:1px;background:#dcd8fc"></div>
<div class="a" style="left:19px;top:227px;width:1px;height:20px;background:#dcd8fc"></div>
<div class="a" style="left:19px;top:246px;width:30px;height:1px;background:#100c34"></div>
<div class="a" style="left:48px;top:227px;width:1px;height:20px;background:#100c34"></div>
<div class="t" style="left:24px;top:230px;">3</div>
<div class="a" style="left:49px;top:247px;width:918px;height:20px;background:#f0f0f0"></div>
<div class="a" style="left:119px;top:247px;width:1px;height:20px;background:#fafafa"></div>
<div class="t" style="left:52px;top:248px;">1003</div>
<div class="a" style="left:230px;top:247px;width:1px;height:20px;background:#fafafa"></div>
<div class="t" style="left:123px;top:248px;">Szabó József</div>
<div class="a" style="left:286px;top:247px;width:1px;height:20px;background:#fafafa"></div>
<div class="t" style="left:234px;top:248px;">1004</div>
<div class="a" style="left:397px;top:247px;width:1px;height:20px;background:#fafafa"></div>
<div class="a" style="left:446px;top:247px;width:1px;height:20px;background:#fafafa"></div>
<div class="t" style="left:401px;top:248px;">8800</div>
<div class="a" style="left:523px;top:247px;width:1px;height:20px;background:#fafafa"></div>
<div class="t" style="left:450px;top:248px;">Nagykanizsa</div>
<div class="a" style="left:603px;top:247px;width:1px;height:20px;background:#fafafa"></div>
<div class="t" style="left:527px;top:248px;">Szőlő u. 7.</div>
<div class="a" style="left:639px;top:247px;width:1px;height:20px;background:#fafafa"></div>
<div class="a" style="left:722px;top:247px;width:1px;height:20px;background:#fafafa"></div>
<div class="t" style="left:640px;top:248px;width:81px;text-align:right">395</div>
<div class="a" style="left:826px;top:247px;width:1px;height:20px;background:#fafafa"></div>
<div class="a" style="left:886px;top:247px;width:1px;height:20px;background:#fafafa"></div>
<div class="t" style="left:827px;top:248px;width:58px;text-align:right">395</div>
<div class="a" style="left:966px;top:247px;width:1px;height:20px;background:#fafafa"></div>
<div class="t" style="left:890px;top:248px;">Árlista</div>
<div class="a" style="left:19px;top:247px;width:30px;height:1px;background:#dcd8fc"></div>
<div class="a" style="left:19px;top:247px;width:1px;height:20px;background:#dcd8fc"></div>
<div class="a" style="left:19px;top:266px;width:30px;height:1px;background:#100c34"></div>
<div class="a" style="left:48px;top:247px;width:1px;height:20px;background:#100c34"></div>
<div class="t" style="left:24px;top:250px;">4</div>
<div class="a" style="left:49px;top:267px;width:918px;height:20px;background:#ffffff"></div>
<div class="a" style="left:49px;top:286px;width:918px;height:1px;background:#ebebeb"></div>
<div class="a" style="left:119px;top:267px;width:1px;height:20px;background:#e8e8e8"></div>
<div class="t" style="left:52px;top:268px;">1004</div>
<div class="a" style="left:230px;top:267px;width:1px;height:20px;background:#e8e8e8"></div>
<div class="t" style="left:123px;top:268px;">Kis Jolán</div>
<div class="a" style="left:286px;top:267px;width:1px;height:20px;background:#e8e8e8"></div>
<div class="t" style="left:234px;top:268px;">1004</div>
<div class="a" style="left:397px;top:267px;width:1px;height:20px;background:#e8e8e8"></div>
<div class="t" style="left:290px;top:268px;">Kis Jolán</div>
<div class="a" style="left:446px;top:267px;width:1px;height:20px;background:#e8e8e8"></div>
<div class="t" style="left:401px;top:268px;">8800</div>
<div class="a" style="left:523px;top:267px;width:1px;height:20px;background:#e8e8e8"></div>
<div class="t" style="left:450px;top:268px;">Nagykanizsa</div>
<div class="a" style="left:603px;top:267px;width:1px;height:20px;background:#e8e8e8"></div>
<div class="t" style="left:527px;top:268px;">Szőlő u. 7.</div>
<div class="a" style="left:639px;top:267px;width:1px;height:20px;background:#e8e8e8"></div>
<div class="a" style="left:722px;top:267px;width:1px;height:20px;background:#e8e8e8"></div>
<div class="t" style="left:640px;top:268px;width:81px;text-align:right">395</div>
<div class="a" style="left:826px;top:267px;width:1px;height:20px;background:#e8e8e8"></div>
<div class="a" style="left:886px;top:267px;width:1px;height:20px;background:#e8e8e8"></div>
<div class="t" style="left:827px;top:268px;width:58px;text-align:right">395</div>
<div class="a" style="left:966px;top:267px;width:1px;height:20px;background:#e8e8e8"></div>
<div class="t" style="left:890px;top:268px;">Árlista</div>
<div class="a" style="left:19px;top:267px;width:30px;height:1px;background:#dcd8fc"></div>
<div class="a" style="left:19px;top:267px;width:1px;height:20px;background:#dcd8fc"></div>
<div class="a" style="left:19px;top:286px;width:30px;height:1px;background:#100c34"></div>
<div class="a" style="left:48px;top:267px;width:1px;height:20px;background:#100c34"></div>
<div class="t" style="left:24px;top:270px;">5</div>
<div class="a" style="left:49px;top:287px;width:918px;height:20px;background:#f0f0f0"></div>
<div class="a" style="left:119px;top:287px;width:1px;height:20px;background:#fafafa"></div>
<div class="t" style="left:52px;top:288px;">1005</div>
<div class="a" style="left:230px;top:287px;width:1px;height:20px;background:#fafafa"></div>
<div class="t" style="left:123px;top:288px;">Szabó Gáspár</div>
<div class="a" style="left:286px;top:287px;width:1px;height:20px;background:#fafafa"></div>
<div class="t" style="left:234px;top:288px;">1005</div>
<div class="a" style="left:397px;top:287px;width:1px;height:20px;background:#fafafa"></div>
<div class="t" style="left:290px;top:288px;">Szabó Gáspár</div>
<div class="a" style="left:446px;top:287px;width:1px;height:20px;background:#fafafa"></div>
<div class="t" style="left:401px;top:288px;">6300</div>
<div class="a" style="left:523px;top:287px;width:1px;height:20px;background:#fafafa"></div>
<div class="t" style="left:450px;top:288px;">Kalocsa</div>
<div class="a" style="left:603px;top:287px;width:1px;height:20px;background:#fafafa"></div>
<div class="t" style="left:527px;top:288px;">Szép u. 67.</div>
<div class="a" style="left:639px;top:287px;width:1px;height:20px;background:#fafafa"></div>
<div class="a" style="left:722px;top:287px;width:1px;height:20px;background:#fafafa"></div>
<div class="t" style="left:640px;top:288px;width:81px;text-align:right">395</div>
<div class="a" style="left:826px;top:287px;width:1px;height:20px;background:#fafafa"></div>
<div class="a" style="left:886px;top:287px;width:1px;height:20px;background:#fafafa"></div>
<div class="t" style="left:827px;top:288px;width:58px;text-align:right">395</div>
<div class="a" style="left:966px;top:287px;width:1px;height:20px;background:#fafafa"></div>
<div class="t" style="left:890px;top:288px;">Árlista</div>
<div class="a" style="left:19px;top:287px;width:30px;height:1px;background:#dcd8fc"></div>
<div class="a" style="left:19px;top:287px;width:1px;height:20px;background:#dcd8fc"></div>
<div class="a" style="left:19px;top:306px;width:30px;height:1px;background:#100c34"></div>
<div class="a" style="left:48px;top:287px;width:1px;height:20px;background:#100c34"></div>
<div class="t" style="left:24px;top:290px;">6</div>
<div class="a" style="left:49px;top:307px;width:918px;height:20px;background:#ffffff"></div>
<div class="a" style="left:49px;top:326px;width:918px;height:1px;background:#ebebeb"></div>
<div class="a" style="left:119px;top:307px;width:1px;height:20px;background:#e8e8e8"></div>
<div class="t" style="left:52px;top:308px;">1006</div>
<div class="a" style="left:230px;top:307px;width:1px;height:20px;background:#e8e8e8"></div>
<div class="t" style="left:123px;top:308px;">Szabó Kázmér</div>
<div class="a" style="left:286px;top:307px;width:1px;height:20px;background:#e8e8e8"></div>
<div class="t" style="left:234px;top:308px;">1006</div>
<div class="a" style="left:397px;top:307px;width:1px;height:20px;background:#e8e8e8"></div>
<div class="t" style="left:290px;top:308px;">Szabó Kázmér</div>
<div class="a" style="left:446px;top:307px;width:1px;height:20px;background:#e8e8e8"></div>
<div class="t" style="left:401px;top:308px;">5600</div>
<div class="a" style="left:523px;top:307px;width:1px;height:20px;background:#e8e8e8"></div>
<div class="t" style="left:450px;top:308px;">Békéscsaba</div>
<div class="a" style="left:603px;top:307px;width:1px;height:20px;background:#e8e8e8"></div>
<div class="t" style="left:527px;top:308px;">Alkony u. 2.</div>
<div class="a" style="left:639px;top:307px;width:1px;height:20px;background:#e8e8e8"></div>
<div class="a" style="left:722px;top:307px;width:1px;height:20px;background:#e8e8e8"></div>
<div class="t" style="left:640px;top:308px;width:81px;text-align:right">395</div>
<div class="a" style="left:826px;top:307px;width:1px;height:20px;background:#e8e8e8"></div>
<div class="a" style="left:886px;top:307px;width:1px;height:20px;background:#e8e8e8"></div>
<div class="t" style="left:827px;top:308px;width:58px;text-align:right">395</div>
<div class="a" style="left:966px;top:307px;width:1px;height:20px;background:#e8e8e8"></div>
<div class="t" style="left:890px;top:308px;">Árlista</div>
<div class="a" style="left:19px;top:307px;width:30px;height:1px;background:#dcd8fc"></div>
<div class="a" style="left:19px;top:307px;width:1px;height:20px;background:#dcd8fc"></div>
<div class="a" style="left:19px;top:326px;width:30px;height:1px;background:#100c34"></div>
<div class="a" style="left:48px;top:307px;width:1px;height:20px;background:#100c34"></div>
<div class="t" style="left:24px;top:310px;">7</div>
<div class="a" style="left:49px;top:327px;width:918px;height:20px;background:#f0f0f0"></div>
<div class="a" style="left:119px;top:327px;width:1px;height:20px;background:#fafafa"></div>
<div class="t" style="left:52px;top:328px;">1007</div>
<div class="a" style="left:230px;top:327px;width:1px;height:20px;background:#fafafa"></div>
<div class="t" style="left:123px;top:328px;">Nagy Hús Kft.</div>
<div class="a" style="left:286px;top:327px;width:1px;height:20px;background:#fafafa"></div>
<div class="t" style="left:234px;top:328px;">1007</div>
<div class="a" style="left:397px;top:327px;width:1px;height:20px;background:#fafafa"></div>
<div class="t" style="left:290px;top:328px;">Nagy Hús Kft.</div>
<div class="a" style="left:446px;top:327px;width:1px;height:20px;background:#fafafa"></div>
<div class="t" style="left:401px;top:328px;">6750</div>
<div class="a" style="left:523px;top:327px;width:1px;height:20px;background:#fafafa"></div>
<div class="t" style="left:450px;top:328px;">Algyő</div>
<div class="a" style="left:603px;top:327px;width:1px;height:20px;background:#fafafa"></div>
<div class="t" style="left:527px;top:328px;">Fő út 13.</div>
<div class="a" style="left:639px;top:327px;width:1px;height:20px;background:#fafafa"></div>
<div class="a" style="left:722px;top:327px;width:1px;height:20px;background:#fafafa"></div>
<div class="t" style="left:640px;top:328px;width:81px;text-align:right">395</div>
<div class="a" style="left:826px;top:327px;width:1px;height:20px;background:#fafafa"></div>
<div class="a" style="left:886px;top:327px;width:1px;height:20px;background:#fafafa"></div>
<div class="t" style="left:827px;top:328px;width:58px;text-align:right">395</div>
<div class="a" style="left:966px;top:327px;width:1px;height:20px;background:#fafafa"></div>
<div class="t" style="left:890px;top:328px;">Árlista</div>
<div class="a" style="left:19px;top:327px;width:30px;height:1px;background:#dcd8fc"></div>
<div class="a" style="left:19px;top:327px;width:1px;height:20px;background:#dcd8fc"></div>
<div class="a" style="left:19px;top:346px;width:30px;height:1px;background:#100c34"></div>
<div class="a" style="left:48px;top:327px;width:1px;height:20px;background:#100c34"></div>
<div class="t" style="left:24px;top:330px;">8</div>
<div class="a" style="left:49px;top:347px;width:918px;height:20px;background:#ffffff"></div>
<div class="a" style="left:49px;top:366px;width:918px;height:1px;background:#ebebeb"></div>
<div class="a" style="left:119px;top:347px;width:1px;height:20px;background:#e8e8e8"></div>
<div class="t" style="left:52px;top:348px;">1008</div>
<div class="a" style="left:230px;top:347px;width:1px;height:20px;background:#e8e8e8"></div>
<div class="t" style="left:123px;top:348px;">Szabolcska Szabolcs</div>
<div class="a" style="left:286px;top:347px;width:1px;height:20px;background:#e8e8e8"></div>
<div class="t" style="left:234px;top:348px;">1008</div>
<div class="a" style="left:397px;top:347px;width:1px;height:20px;background:#e8e8e8"></div>
<div class="t" style="left:290px;top:348px;">Szabolcska Szabolcs</div>
<div class="a" style="left:446px;top:347px;width:1px;height:20px;background:#e8e8e8"></div>
<div class="t" style="left:401px;top:348px;">6060</div>
<div class="a" style="left:523px;top:347px;width:1px;height:20px;background:#e8e8e8"></div>
<div class="t" style="left:450px;top:348px;">Tiszakécske</div>
<div class="a" style="left:603px;top:347px;width:1px;height:20px;background:#e8e8e8"></div>
<div class="t" style="left:527px;top:348px;">Sziget u. 7.</div>
<div class="a" style="left:639px;top:347px;width:1px;height:20px;background:#e8e8e8"></div>
<div class="a" style="left:722px;top:347px;width:1px;height:20px;background:#e8e8e8"></div>
<div class="t" style="left:640px;top:348px;width:81px;text-align:right">395</div>
<div class="a" style="left:826px;top:347px;width:1px;height:20px;background:#e8e8e8"></div>
<div class="a" style="left:886px;top:347px;width:1px;height:20px;background:#e8e8e8"></div>
<div class="t" style="left:827px;top:348px;width:58px;text-align:right">395</div>
<div class="a" style="left:966px;top:347px;width:1px;height:20px;background:#e8e8e8"></div>
<div class="t" style="left:890px;top:348px;">Árlista</div>
<div class="a" style="left:19px;top:347px;width:30px;height:1px;background:#dcd8fc"></div>
<div class="a" style="left:19px;top:347px;width:1px;height:20px;background:#dcd8fc"></div>
<div class="a" style="left:19px;top:366px;width:30px;height:1px;background:#100c34"></div>
<div class="a" style="left:48px;top:347px;width:1px;height:20px;background:#100c34"></div>
<div class="t" style="left:24px;top:350px;">9</div>
<div class="a" style="left:49px;top:367px;width:918px;height:20px;background:#f0f0f0"></div>
<div class="a" style="left:119px;top:367px;width:1px;height:20px;background:#fafafa"></div>
<div class="t" style="left:52px;top:368px;">1009</div>
<div class="a" style="left:230px;top:367px;width:1px;height:20px;background:#fafafa"></div>
<div class="t" style="left:123px;top:368px;">Csaba Kázmér</div>
<div class="a" style="left:286px;top:367px;width:1px;height:20px;background:#fafafa"></div>
<div class="t" style="left:234px;top:368px;">1009</div>
<div class="a" style="left:397px;top:367px;width:1px;height:20px;background:#fafafa"></div>
<div class="t" style="left:290px;top:368px;">Csaba Kázmér</div>
<div class="a" style="left:446px;top:367px;width:1px;height:20px;background:#fafafa"></div>
<div class="t" style="left:401px;top:368px;">7000</div>
<div class="a" style="left:523px;top:367px;width:1px;height:20px;background:#fafafa"></div>
<div class="t" style="left:450px;top:368px;">Sárbogárd</div>
<div class="a" style="left:603px;top:367px;width:1px;height:20px;background:#fafafa"></div>
<div class="t" style="left:527px;top:368px;">Záror út 8.</div>
<div class="a" style="left:639px;top:367px;width:1px;height:20px;background:#fafafa"></div>
<div class="a" style="left:722px;top:367px;width:1px;height:20px;background:#fafafa"></div>
<div class="t" style="left:640px;top:368px;width:81px;text-align:right">395</div>
<div class="a" style="left:826px;top:367px;width:1px;height:20px;background:#fafafa"></div>
<div class="a" style="left:886px;top:367px;width:1px;height:20px;background:#fafafa"></div>
<div class="t" style="left:827px;top:368px;width:58px;text-align:right">395</div>
<div class="a" style="left:966px;top:367px;width:1px;height:20px;background:#fafafa"></div>
<div class="t" style="left:890px;top:368px;">Árlista</div>
<div class="a" style="left:19px;top:367px;width:30px;height:1px;background:#dcd8fc"></div>
<div class="a" style="left:19px;top:367px;width:1px;height:20px;background:#dcd8fc"></div>
<div class="a" style="left:19px;top:386px;width:30px;height:1px;background:#100c34"></div>
<div class="a" style="left:48px;top:367px;width:1px;height:20px;background:#100c34"></div>
<div class="t" style="left:23px;top:370px;letter-spacing:0.3px">10</div>
<div class="a" style="left:49px;top:387px;width:918px;height:20px;background:#ffffff"></div>
<div class="a" style="left:49px;top:406px;width:918px;height:1px;background:#ebebeb"></div>
<div class="a" style="left:119px;top:387px;width:1px;height:20px;background:#e8e8e8"></div>
<div class="t" style="left:52px;top:388px;">1010</div>
<div class="a" style="left:230px;top:387px;width:1px;height:20px;background:#e8e8e8"></div>
<div class="t" style="left:123px;top:388px;">Szabó Gábor</div>
<div class="a" style="left:286px;top:387px;width:1px;height:20px;background:#e8e8e8"></div>
<div class="t" style="left:234px;top:388px;">1010</div>
<div class="a" style="left:397px;top:387px;width:1px;height:20px;background:#e8e8e8"></div>
<div class="t" style="left:290px;top:388px;">Szabó Gábor</div>
<div class="a" style="left:446px;top:387px;width:1px;height:20px;background:#e8e8e8"></div>
<div class="t" style="left:401px;top:388px;">4400</div>
<div class="a" style="left:523px;top:387px;width:1px;height:20px;background:#e8e8e8"></div>
<div class="t" style="left:450px;top:388px;">Nyíregyháza</div>
<div class="a" style="left:603px;top:387px;width:1px;height:20px;background:#e8e8e8"></div>
<div class="t" style="left:527px;top:388px;">Nagy u. 7.</div>
<div class="a" style="left:639px;top:387px;width:1px;height:20px;background:#e8e8e8"></div>
<div class="a" style="left:722px;top:387px;width:1px;height:20px;background:#e8e8e8"></div>
<div class="t" style="left:640px;top:388px;width:81px;text-align:right">395</div>
<div class="a" style="left:826px;top:387px;width:1px;height:20px;background:#e8e8e8"></div>
<div class="a" style="left:886px;top:387px;width:1px;height:20px;background:#e8e8e8"></div>
<div class="t" style="left:827px;top:388px;width:58px;text-align:right">395</div>
<div class="a" style="left:966px;top:387px;width:1px;height:20px;background:#e8e8e8"></div>
<div class="t" style="left:890px;top:388px;">Árlista</div>
<div class="a" style="left:19px;top:387px;width:30px;height:1px;background:#dcd8fc"></div>
<div class="a" style="left:19px;top:387px;width:1px;height:20px;background:#dcd8fc"></div>
<div class="a" style="left:19px;top:406px;width:30px;height:1px;background:#100c34"></div>
<div class="a" style="left:48px;top:387px;width:1px;height:20px;background:#100c34"></div>
<div class="t" style="left:23px;top:390px;letter-spacing:0.3px">11</div>
<div class="a" style="left:49px;top:407px;width:918px;height:20px;background:#f0f0f0"></div>
<div class="a" style="left:119px;top:407px;width:1px;height:20px;background:#fafafa"></div>
<div class="t" style="left:52px;top:408px;">1011</div>
<div class="a" style="left:230px;top:407px;width:1px;height:20px;background:#fafafa"></div>
<div class="t" style="left:123px;top:408px;">Király Sándorné</div>
<div class="a" style="left:286px;top:407px;width:1px;height:20px;background:#fafafa"></div>
<div class="t" style="left:234px;top:408px;">1011</div>
<div class="a" style="left:397px;top:407px;width:1px;height:20px;background:#fafafa"></div>
<div class="t" style="left:290px;top:408px;">Király Sándorné</div>
<div class="a" style="left:446px;top:407px;width:1px;height:20px;background:#fafafa"></div>
<div class="t" style="left:401px;top:408px;">3700</div>
<div class="a" style="left:523px;top:407px;width:1px;height:20px;background:#fafafa"></div>
<div class="t" style="left:450px;top:408px;">Kazincbarcika</div>
<div class="a" style="left:603px;top:407px;width:1px;height:20px;background:#fafafa"></div>
<div class="t" style="left:527px;top:408px;">Somogyi u. 23.</div>
<div class="a" style="left:639px;top:407px;width:1px;height:20px;background:#fafafa"></div>
<div class="a" style="left:722px;top:407px;width:1px;height:20px;background:#fafafa"></div>
<div class="t" style="left:640px;top:408px;width:81px;text-align:right">395</div>
<div class="a" style="left:826px;top:407px;width:1px;height:20px;background:#fafafa"></div>
<div class="a" style="left:886px;top:407px;width:1px;height:20px;background:#fafafa"></div>
<div class="t" style="left:827px;top:408px;width:58px;text-align:right">395</div>
<div class="a" style="left:966px;top:407px;width:1px;height:20px;background:#fafafa"></div>
<div class="t" style="left:890px;top:408px;">Árlista</div>
<div class="a" style="left:19px;top:407px;width:30px;height:1px;background:#dcd8fc"></div>
<div class="a" style="left:19px;top:407px;width:1px;height:20px;background:#dcd8fc"></div>
<div class="a" style="left:19px;top:426px;width:30px;height:1px;background:#100c34"></div>
<div class="a" style="left:48px;top:407px;width:1px;height:20px;background:#100c34"></div>
<div class="t" style="left:23px;top:410px;letter-spacing:0.3px">12</div>
<div class="a" style="left:49px;top:427px;width:918px;height:20px;background:#ffffff"></div>
<div class="a" style="left:49px;top:446px;width:918px;height:1px;background:#ebebeb"></div>
<div class="a" style="left:119px;top:427px;width:1px;height:20px;background:#e8e8e8"></div>
<div class="t" style="left:52px;top:428px;">1012</div>
<div class="a" style="left:230px;top:427px;width:1px;height:20px;background:#e8e8e8"></div>
<div class="t" style="left:123px;top:428px;">Szabó Kázmér</div>
<div class="a" style="left:286px;top:427px;width:1px;height:20px;background:#e8e8e8"></div>
<div class="t" style="left:234px;top:428px;">1012</div>
<div class="a" style="left:397px;top:427px;width:1px;height:20px;background:#e8e8e8"></div>
<div class="t" style="left:290px;top:428px;">Szabó Kázmér</div>
<div class="a" style="left:446px;top:427px;width:1px;height:20px;background:#e8e8e8"></div>
<div class="t" style="left:401px;top:428px;">7600</div>
<div class="a" style="left:523px;top:427px;width:1px;height:20px;background:#e8e8e8"></div>
<div class="t" style="left:450px;top:428px;">Pécs</div>
<div class="a" style="left:603px;top:427px;width:1px;height:20px;background:#e8e8e8"></div>
<div class="t" style="left:527px;top:428px;">Hegyi út 2.</div>
<div class="a" style="left:639px;top:427px;width:1px;height:20px;background:#e8e8e8"></div>
<div class="a" style="left:722px;top:427px;width:1px;height:20px;background:#e8e8e8"></div>
<div class="t" style="left:640px;top:428px;width:81px;text-align:right">395</div>
<div class="a" style="left:826px;top:427px;width:1px;height:20px;background:#e8e8e8"></div>
<div class="a" style="left:886px;top:427px;width:1px;height:20px;background:#e8e8e8"></div>
<div class="t" style="left:827px;top:428px;width:58px;text-align:right">395</div>
<div class="a" style="left:966px;top:427px;width:1px;height:20px;background:#e8e8e8"></div>
<div class="t" style="left:890px;top:428px;">Árlista</div>
<div class="a" style="left:19px;top:427px;width:30px;height:1px;background:#dcd8fc"></div>
<div class="a" style="left:19px;top:427px;width:1px;height:20px;background:#dcd8fc"></div>
<div class="a" style="left:19px;top:446px;width:30px;height:1px;background:#100c34"></div>
<div class="a" style="left:48px;top:427px;width:1px;height:20px;background:#100c34"></div>
<div class="t" style="left:23px;top:430px;letter-spacing:0.3px">13</div>
<div class="a" style="left:49px;top:447px;width:918px;height:20px;background:#f0f0f0"></div>
<div class="a" style="left:119px;top:447px;width:1px;height:20px;background:#fafafa"></div>
<div class="t" style="left:52px;top:448px;">1013</div>
<div class="a" style="left:230px;top:447px;width:1px;height:20px;background:#fafafa"></div>
<div class="t" style="left:123px;top:448px;">Nagy Pulyka Bt.</div>
<div class="a" style="left:286px;top:447px;width:1px;height:20px;background:#fafafa"></div>
<div class="t" style="left:234px;top:448px;">1013/1</div>
<div class="a" style="left:397px;top:447px;width:1px;height:20px;background:#fafafa"></div>
<div class="t" style="left:290px;top:448px;">Nagy Pulyka Bt.</div>
<div class="a" style="left:446px;top:447px;width:1px;height:20px;background:#fafafa"></div>
<div class="t" style="left:401px;top:448px;">3700</div>
<div class="a" style="left:523px;top:447px;width:1px;height:20px;background:#fafafa"></div>
<div class="t" style="left:450px;top:448px;">Kazincbarcika</div>
<div class="a" style="left:603px;top:447px;width:1px;height:20px;background:#fafafa"></div>
<div class="t" style="left:527px;top:448px;">Szabados 72.</div>
<div class="a" style="left:639px;top:447px;width:1px;height:20px;background:#fafafa"></div>
<div class="a" style="left:722px;top:447px;width:1px;height:20px;background:#fafafa"></div>
<div class="t" style="left:640px;top:448px;width:81px;text-align:right">395</div>
<div class="a" style="left:826px;top:447px;width:1px;height:20px;background:#fafafa"></div>
<div class="a" style="left:886px;top:447px;width:1px;height:20px;background:#fafafa"></div>
<div class="t" style="left:827px;top:448px;width:58px;text-align:right">395</div>
<div class="a" style="left:966px;top:447px;width:1px;height:20px;background:#fafafa"></div>
<div class="t" style="left:890px;top:448px;">Árlista</div>
<div class="a" style="left:19px;top:447px;width:30px;height:1px;background:#dcd8fc"></div>
<div class="a" style="left:19px;top:447px;width:1px;height:20px;background:#dcd8fc"></div>
<div class="a" style="left:19px;top:466px;width:30px;height:1px;background:#100c34"></div>
<div class="a" style="left:48px;top:447px;width:1px;height:20px;background:#100c34"></div>
<div class="t" style="left:23px;top:450px;letter-spacing:0.3px">14</div>
<div class="a" style="left:49px;top:467px;width:918px;height:20px;background:#ffffff"></div>
<div class="a" style="left:49px;top:486px;width:918px;height:1px;background:#ebebeb"></div>
<div class="a" style="left:119px;top:467px;width:1px;height:20px;background:#e8e8e8"></div>
<div class="t" style="left:52px;top:468px;">1018</div>
<div class="a" style="left:230px;top:467px;width:1px;height:20px;background:#e8e8e8"></div>
<div class="t" style="left:123px;top:468px;">Kis Éva</div>
<div class="a" style="left:286px;top:467px;width:1px;height:20px;background:#e8e8e8"></div>
<div class="t" style="left:234px;top:468px;">1018</div>
<div class="a" style="left:397px;top:467px;width:1px;height:20px;background:#e8e8e8"></div>
<div class="t" style="left:290px;top:468px;">Kis Éva</div>
<div class="a" style="left:446px;top:467px;width:1px;height:20px;background:#e8e8e8"></div>
<div class="t" style="left:401px;top:468px;">3100</div>
<div class="a" style="left:523px;top:467px;width:1px;height:20px;background:#e8e8e8"></div>
<div class="t" style="left:450px;top:468px;">Salgótarján</div>
<div class="a" style="left:603px;top:467px;width:1px;height:20px;background:#e8e8e8"></div>
<div class="t" style="left:527px;top:468px;">Liget u. 3.</div>
<div class="a" style="left:639px;top:467px;width:1px;height:20px;background:#e8e8e8"></div>
<div class="a" style="left:722px;top:467px;width:1px;height:20px;background:#e8e8e8"></div>
<div class="t" style="left:640px;top:468px;width:81px;text-align:right">395</div>
<div class="a" style="left:826px;top:467px;width:1px;height:20px;background:#e8e8e8"></div>
<div class="a" style="left:886px;top:467px;width:1px;height:20px;background:#e8e8e8"></div>
<div class="t" style="left:827px;top:468px;width:58px;text-align:right">395</div>
<div class="a" style="left:966px;top:467px;width:1px;height:20px;background:#e8e8e8"></div>
<div class="t" style="left:890px;top:468px;">Árlista</div>
<div class="a" style="left:19px;top:467px;width:30px;height:1px;background:#dcd8fc"></div>
<div class="a" style="left:19px;top:467px;width:1px;height:20px;background:#dcd8fc"></div>
<div class="a" style="left:19px;top:486px;width:30px;height:1px;background:#100c34"></div>
<div class="a" style="left:48px;top:467px;width:1px;height:20px;background:#100c34"></div>
<div class="t" style="left:23px;top:470px;letter-spacing:0.3px">15</div>
<div class="a" style="left:938px;top:164px;width:79px;height:50px;background:rgba(40,30,60,0.22);filter:blur(1px)"></div>
<div class="a" style="left:936px;top:162px;width:79px;height:50px;background:#ffffcc;border:1px solid #000"></div>
<div class="t" style="left:939px;top:165px;">AT, Átutalás</div>
<div class="t" style="left:939px;top:181px;">KP, Készpénz</div>
<div class="a" style="left:937px;top:195px;width:77px;height:16px;background:#000"></div>
<div class="a" style="left:937px;top:195px;width:77px;height:16px;background:#5a50b8;background-clip:padding-box;border:1px dotted #fff"></div>
<div class="a" style="left:4px;top:773px;width:44px;height:1px;background:#6c64a8"></div>
<div class="a" style="left:4px;top:773px;width:1px;height:16px;background:#6c64a8"></div>
<div class="a" style="left:4px;top:788px;width:44px;height:1px;background:#dcd8fc"></div>
<div class="a" style="left:47px;top:773px;width:1px;height:16px;background:#dcd8fc"></div>
<div class="t" style="left:6px;top:775px;letter-spacing:0.2px">-v1.91X</div>
<div class="a" style="left:50px;top:773px;width:129px;height:1px;background:#6c64a8"></div>
<div class="a" style="left:50px;top:773px;width:1px;height:16px;background:#6c64a8"></div>
<div class="a" style="left:50px;top:788px;width:129px;height:1px;background:#dcd8fc"></div>
<div class="a" style="left:178px;top:773px;width:1px;height:16px;background:#dcd8fc"></div>
<div class="t" style="left:52px;top:775px;letter-spacing:0.2px">1 / 15</div>
<div class="a" style="left:181px;top:773px;width:25px;height:1px;background:#6c64a8"></div>
<div class="a" style="left:181px;top:773px;width:1px;height:16px;background:#6c64a8"></div>
<div class="a" style="left:181px;top:788px;width:25px;height:1px;background:#dcd8fc"></div>
<div class="a" style="left:205px;top:773px;width:1px;height:16px;background:#dcd8fc"></div>
<svg style="left:182px;top:775px" width="14" height="12"><circle cx="6" cy="6" r="4.6" fill="#fff"/><path d="M1.6 7.5A4.6 4.6 0 0 1 8 1.8" fill="none" stroke="#201840" stroke-width="1.4"/></svg>
<div class="a" style="left:207px;top:773px;width:1061px;height:1px;background:#6c64a8"></div>
<div class="a" style="left:207px;top:773px;width:1px;height:16px;background:#6c64a8"></div>
<div class="a" style="left:207px;top:788px;width:1061px;height:1px;background:#dcd8fc"></div>
<div class="a" style="left:1267px;top:773px;width:1px;height:16px;background:#dcd8fc"></div>
</div>
</body></html>
